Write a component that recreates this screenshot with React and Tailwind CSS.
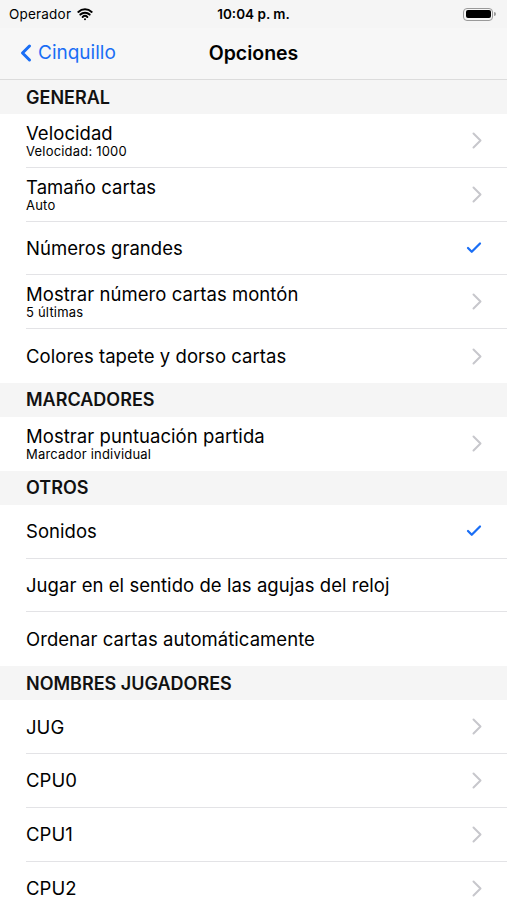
import { ChevronLeft, Check, Wifi } from 'lucide-react';

const SECTIONS = [
    {
        title: 'GENERAL',
        rows: [
            { label: 'Velocidad', detail: 'Velocidad: 1000', accessory: 'chevron' },
            { label: 'Tamaño cartas', detail: 'Auto', accessory: 'chevron' },
            { label: 'Números grandes', accessory: 'check' },
            { label: 'Mostrar número cartas montón', detail: '5 últimas', accessory: 'chevron' },
            { label: 'Colores tapete y dorso cartas', accessory: 'chevron' },
        ],
    },
    {
        title: 'MARCADORES',
        rows: [
            { label: 'Mostrar puntuación partida', detail: 'Marcador individual', accessory: 'chevron' },
        ],
    },
    {
        title: 'OTROS',
        rows: [
            { label: 'Sonidos', accessory: 'check' },
            { label: 'Jugar en el sentido de las agujas del reloj' },
            { label: 'Ordenar cartas automáticamente' },
        ],
    },
    {
        title: 'NOMBRES JUGADORES',
        rows: [
            { label: 'JUG', accessory: 'chevron' },
            { label: 'CPU0', accessory: 'chevron' },
            { label: 'CPU1', accessory: 'chevron' },
            { label: 'CPU2', accessory: 'chevron' },
        ],
    },
];

// iOS style disclosure indicator
function Disclosure() {
    return (
        <svg width="10" height="17" viewBox="0 0 10 17" fill="none" className="mr-[1px]">
            <path d="M1.5 1.5 L8.5 8.5 L1.5 15.5" stroke="#c7c7cc" strokeWidth="2" strokeLinecap="round" strokeLinejoin="round" />
        </svg>
    );
}

function Row({ row, last }) {
    return (
        <div className="flex h-[53.8px] items-center bg-white pl-[26px]">
            <div className={`flex h-full flex-1 items-center pr-[24px] ${last ? '' : 'border-b border-[#e3e3e6]'}`}>
                <div className="flex flex-1 flex-col justify-center">
                    <p className="text-[18.5px] leading-[22px] tracking-[0.05px] text-black">{row.label}</p>
                    {row.detail && <p className="text-[13px] leading-[15px] tracking-[0.2px] text-black">{row.detail}</p>}
                </div>
                {row.accessory === 'chevron' && <Disclosure />}
                {row.accessory === 'check' && <Check size={18} strokeWidth={3} className="text-[#1a6ef5]" />}
            </div>
        </div>
    );
}

export default function App() {
    return (
        <div className="h-[900px] w-[507px] overflow-hidden bg-[#f5f5f5] font-['Inter',sans-serif]">
            {/* status bar */}
            <div className="relative flex h-[28px] items-center px-[9px] text-[13.5px] text-black">
                <span className="flex items-center gap-[6px] tracking-[0.2px]">
                    Operador
                    <Wifi size={16} strokeWidth={3} />
                </span>
                <span className="absolute left-1/2 -translate-x-1/2 font-semibold">10:04 p. m.</span>
                <span className="ml-auto mr-[2px] flex items-center">
                    <span className="flex h-[13px] w-[30px] items-center rounded-[4px] border border-[#9a9a9a] p-[1.5px]">
                        <span className="h-full w-full rounded-[2px] bg-black" />
                    </span>
                    <span className="ml-[1px] h-[4px] w-[2px] rounded-r bg-[#9a9a9a]" />
                </span>
            </div>

            {/* nav bar */}
            <div className="relative flex h-[52px] items-center border-b border-[#dcdcdc] bg-[#f7f7f7] pb-[1px]">
                <span className="flex items-center pl-[12px] text-[19px] text-[#1a6ef5]">
                    <ChevronLeft size={28} strokeWidth={2.6} className="-mr-[2px]" />
                    Cinquillo
                </span>
                <span className="absolute left-1/2 top-1/2 -translate-x-1/2 -translate-y-1/2 text-[19.5px] font-semibold text-black">Opciones</span>
            </div>

            {SECTIONS.map((section) => (
                <div key={section.title}>
                    <div className="flex h-[34px] items-center bg-[#f5f5f5] pl-[26px] text-[18px] font-semibold text-[#111]">
                        {section.title}
                    </div>
                    {section.rows.map((row, i) => (
                        <Row key={row.label} row={row} last={i === section.rows.length - 1} />
                    ))}
                </div>
            ))}
        </div>
    );
}
